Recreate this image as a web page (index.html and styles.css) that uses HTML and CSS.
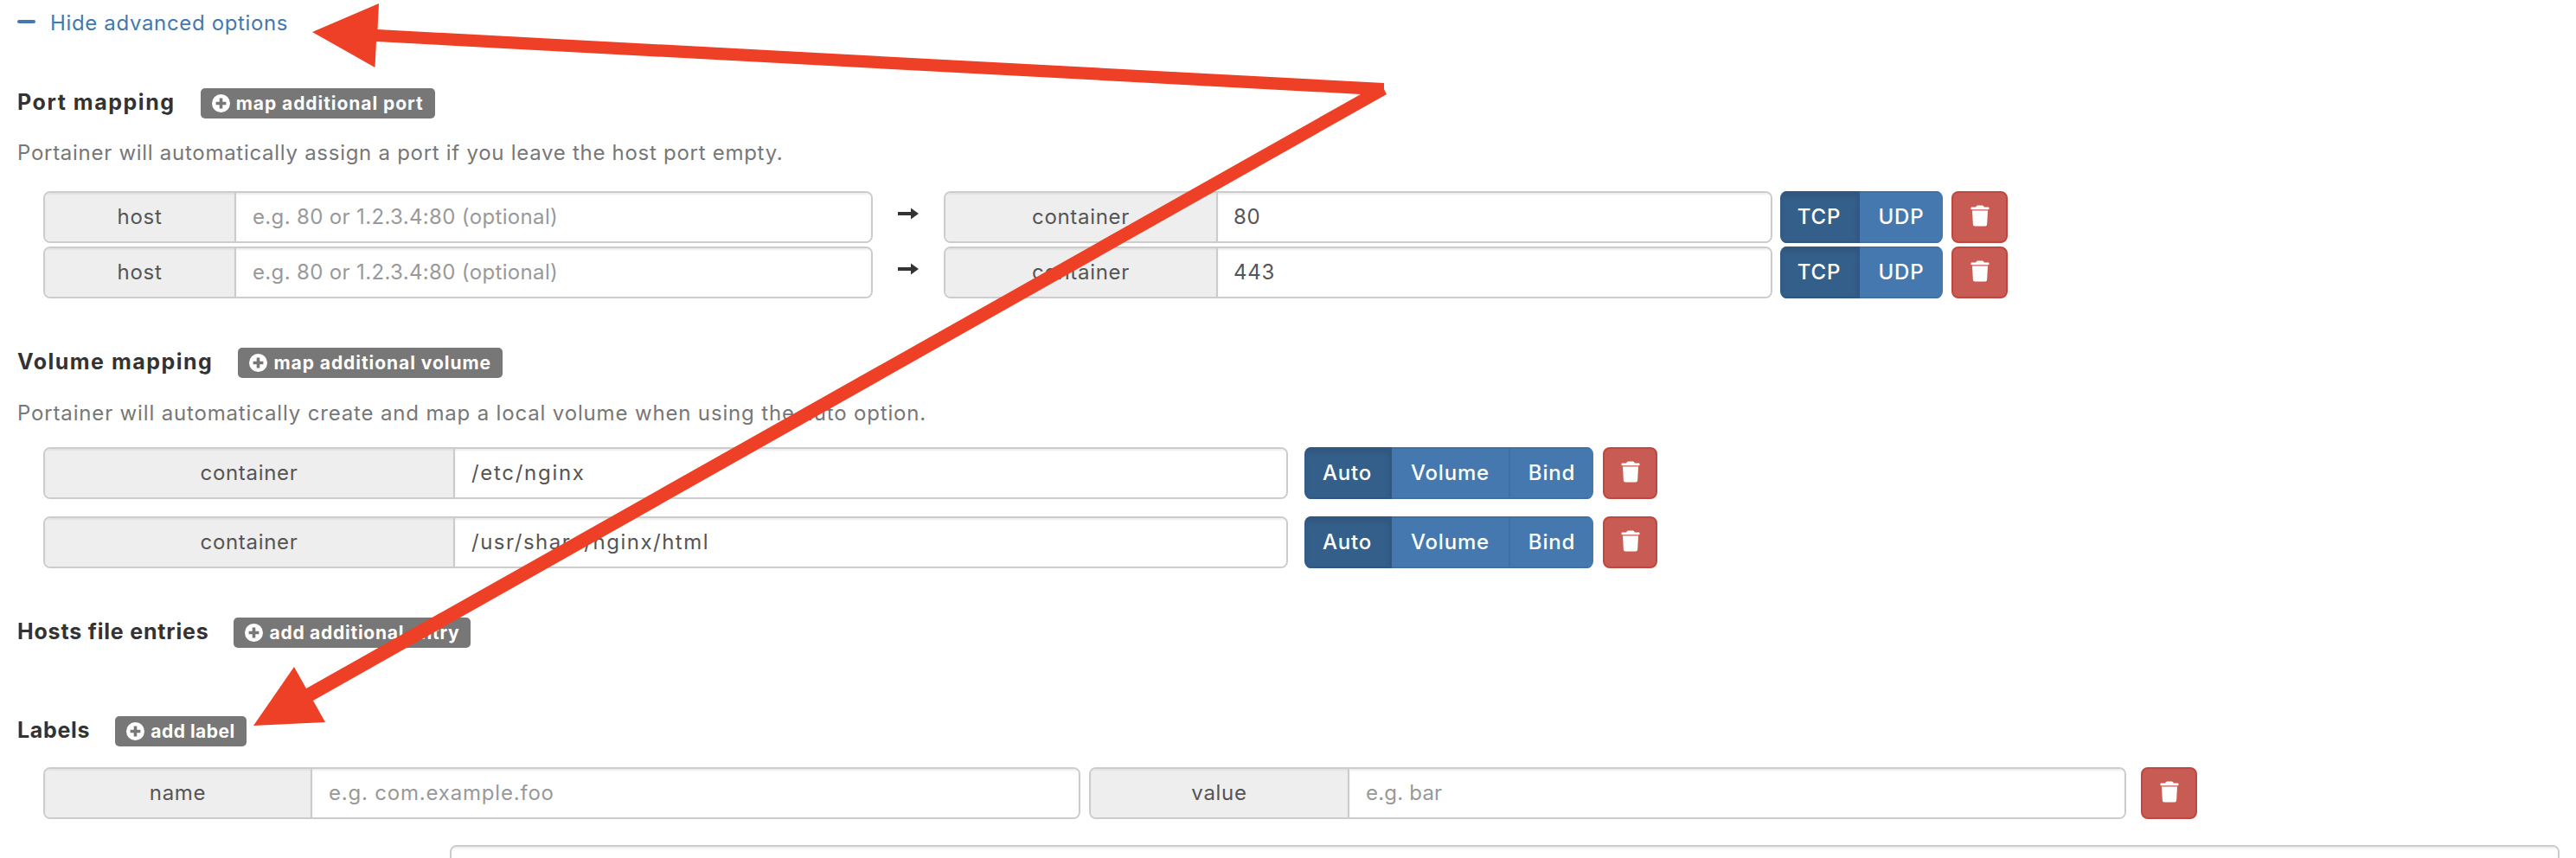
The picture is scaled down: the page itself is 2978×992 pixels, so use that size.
FILE: index.html
```html
<!DOCTYPE html>
<html lang="en">
<head>
<meta charset="utf-8">
<title>Advanced options</title>
<link rel="stylesheet" href="styles.css">
</head>
<body>
<svg width="0" height="0" class="defs">
  <defs>
    <symbol id="trash" viewBox="0 0 22 25">
      <path d="M0.5 3.2C0.5 2.8 0.8 2.6 1.2 2.6H6.2C6.6 1.2 7.6 0.6 9 0.6H13C14.4 0.6 15.4 1.2 15.8 2.6H20.8C21.2 2.6 21.5 2.8 21.5 3.2V4.6C21.5 5 21.2 5.2 20.8 5.2H1.2C0.8 5.2 0.5 5 0.5 4.6Z"/>
      <path d="M2 6.4H20L19.1 22.6C19 23.8 18.2 24.6 17 24.6H5C3.8 24.6 3 23.8 2.9 22.6Z"/>
    </symbol>
    <symbol id="plus" viewBox="0 0 21 21">
      <path fill-rule="evenodd" d="M10.5 0A10.5 10.5 0 1 1 10.5 21A10.5 10.5 0 1 1 10.5 0ZM8.7 4.6V8.7H4.6V12.3H8.7V16.4H12.3V12.3H16.4V8.7H12.3V4.6Z"/>
    </symbol>
  </defs>
</svg>
<main class="page">
  <a class="toggle"><span class="minus"></span><span class="toggle-text">Hide advanced options</span></a>

  <section class="heading s-port">
    <h3 class="title t-port">Port mapping</h3>
    <span class="badge"><svg class="plus"><use href="#plus"/></svg><span class="badge-text b-port">map additional port</span></span>
  </section>
  <p class="help help-port">Portainer will automatically assign a port if you leave the host port empty.</p>

  <div class="rows rows-port">
    <div class="row">
      <div class="group g-host"><div class="addon a-host">host</div><div class="field placeholder">e.g. 80 or 1.2.3.4:80 (optional)</div></div>
      <svg class="to" viewBox="0 0 24 14"><path d="M0 5H15V0.5L24 7L15 13.5V9H0Z"/></svg>
      <div class="group g-cont"><div class="addon a-cont">container</div><div class="field f-cont">80</div></div>
      <div class="btns b-proto"><span class="btn on w-tcp">TCP</span><span class="btn w-udp">UDP</span></div>
      <span class="del d-port"><svg class="trash"><use href="#trash"/></svg></span>
    </div>
    <div class="row">
      <div class="group g-host"><div class="addon a-host">host</div><div class="field placeholder">e.g. 80 or 1.2.3.4:80 (optional)</div></div>
      <svg class="to" viewBox="0 0 24 14"><path d="M0 5H15V0.5L24 7L15 13.5V9H0Z"/></svg>
      <div class="group g-cont"><div class="addon a-cont">container</div><div class="field f-cont">443</div></div>
      <div class="btns b-proto"><span class="btn on w-tcp">TCP</span><span class="btn w-udp">UDP</span></div>
      <span class="del d-port"><svg class="trash"><use href="#trash"/></svg></span>
    </div>
  </div>

  <section class="heading s-next">
    <h3 class="title t-vol">Volume mapping</h3>
    <span class="badge"><svg class="plus"><use href="#plus"/></svg><span class="badge-text b-vol">map additional volume</span></span>
  </section>
  <p class="help help-vol">Portainer will automatically create and map a local volume when using the auto option.</p>

  <div class="rows rows-vol">
    <div class="row">
      <div class="group g-vol"><div class="addon a-vol">container</div><div class="field f-vol">/etc/nginx</div></div>
      <div class="btns b-vol-btns"><span class="btn on w-auto">Auto</span><span class="btn w-volume">Volume</span><span class="btn sep w-bind">Bind</span></div>
      <span class="del d-vol"><svg class="trash"><use href="#trash"/></svg></span>
    </div>
    <div class="row">
      <div class="group g-vol"><div class="addon a-vol">container</div><div class="field f-vol f-long">/usr/share/nginx/html</div></div>
      <div class="btns b-vol-btns"><span class="btn on w-auto">Auto</span><span class="btn w-volume">Volume</span><span class="btn sep w-bind">Bind</span></div>
      <span class="del d-vol"><svg class="trash"><use href="#trash"/></svg></span>
    </div>
  </div>

  <section class="heading s-next">
    <h3 class="title t-hosts">Hosts file entries</h3>
    <span class="badge"><svg class="plus"><use href="#plus"/></svg><span class="badge-text b-hosts">add additional entry</span></span>
  </section>

  <section class="heading s-labels">
    <h3 class="title t-labels">Labels</h3>
    <span class="badge"><svg class="plus"><use href="#plus"/></svg><span class="badge-text b-label">add label</span></span>
  </section>

  <div class="rows rows-label">
    <div class="row">
      <div class="group g-label"><div class="addon a-name">name</div><div class="field placeholder ph-foo">e.g. com.example.foo</div></div>
      <div class="group g-label g-value"><div class="addon a-value">value</div><div class="field placeholder ph-bar">e.g. bar</div></div>
      <span class="del d-label"><svg class="trash"><use href="#trash"/></svg></span>
    </div>
  </div>

  <div class="group g-bottom"><div class="field"></div></div>
</main>

<svg class="annotation" viewBox="0 0 2978 992" aria-hidden="true">
  <polygon points="361,37 438,4 436.5,34 1600,96 1600,103 1603,109 362,810 376,835 293,839 340,771 354,796 1573,109 435,48 433.5,78"/>
</svg>
</body>
</html>
```
FILE: styles.css
```css
* { box-sizing: border-box; }
html, body { margin: 0; padding: 0; background: #fff; }
body {
  width: 2978px;
  height: 992px;
  overflow: hidden;
  position: relative;
  font-family: Inter, "Open Sans", sans-serif;
  font-size: 24px;
  color: #555;
}
.defs { position: absolute; }
.page { padding-left: 20px; }

.toggle { display: flex; align-items: center; height: 52px; color: #4478ae; }
.minus { width: 21px; height: 4px; border-radius: 2px; background: #4478ae; margin-top: -2px; }
.toggle-text { margin-left: 17px; font-size: 24px; letter-spacing: 0.65px; }

.heading { display: flex; align-items: center; height: 35px; }
.s-port { margin-top: 50px; }
.s-next { margin-top: 57px; }
.s-labels { margin-top: 79px; }
.title { margin: 0 29px 2px 0; font-size: 25px; font-weight: 700; color: #333; line-height: 33px; }
.t-port { letter-spacing: 1.55px; }
.t-vol { letter-spacing: 1.5px; }
.t-hosts { letter-spacing: 0.8px; }
.t-labels { letter-spacing: 0.7px; }

.badge {
  display: flex;
  align-items: center;
  height: 35px;
  padding: 0 13px;
  border-radius: 5px;
  background: #777;
  color: #fff;
  font-size: 21px;
  font-weight: 700;
}
.plus { width: 21px; height: 21px; fill: #fff; margin-right: 7px; flex: none; }
.badge-text { white-space: nowrap; letter-spacing: 0.95px; }
.b-hosts { letter-spacing: 0.75px; }
.b-label { letter-spacing: 0.5px; }

.help { margin: 0; height: 36px; line-height: 36px; color: #777; font-size: 24px; }
.help-port { margin-top: 21px; line-height: 38px; letter-spacing: 0.72px; }
.help-vol { margin-top: 23px; letter-spacing: 0.84px; }

.rows { display: flex; flex-direction: column; margin-left: 30px; }
.rows-port { margin-top: 27px; gap: 4px; }
.rows-vol { margin-top: 21px; gap: 20px; }
.rows-label { margin-top: 24px; }
.row { display: flex; align-items: stretch; height: 60px; }

.group {
  display: flex;
  height: 60px;
  border: 2px solid #ccc;
  border-radius: 8px;
  overflow: hidden;
  flex: none;
}
.addon {
  display: flex;
  align-items: center;
  justify-content: center;
  padding-bottom: 2px;
  background: #eee;
  border-right: 2px solid #ccc;
  flex: none;
  box-shadow: inset 0 2px 2px rgba(0, 0, 0, .05);
  font-size: 24px;
  letter-spacing: 0.7px;
}
.field {
  display: flex;
  align-items: center;
  flex: 1;
  padding: 0 0 2px 19px;
  background: #fff;
  box-shadow: inset 0 2px 2px rgba(0, 0, 0, .075);
  font-size: 24px;
}
.placeholder { color: #999; letter-spacing: 0.35px; }
.ph-foo { letter-spacing: 0.8px; }
.ph-bar { letter-spacing: 0.2px; }

.g-host { width: 959px; }
.a-host { width: 221px; }
.to { width: 24px; height: 14px; margin: 19px 29px 0; fill: #333; flex: none; }
.g-cont { width: 958px; }
.a-cont { width: 315px; }
.f-cont { padding-left: 18px; letter-spacing: 0.7px; }
.b-proto { margin-left: 9px; }
.w-tcp { width: 92px; }
.w-udp { width: 96px; }
.d-port { margin-left: 10px; width: 65px; }

.g-vol { width: 1439px; }
.a-vol { width: 474px; }
.f-vol { letter-spacing: 1.7px; }
.f-long { letter-spacing: 1.5px; }
.b-vol-btns { margin-left: 19px; }
.w-auto { width: 101px; }
.w-volume { width: 135px; }
.w-bind { width: 98px; }
.d-vol { margin-left: 11px; width: 63px; }

.g-label { width: 1199px; }
.g-value { margin-left: 10px; }
.a-name { width: 309px; }
.a-value { width: 299px; }
.d-label { margin-left: 17px; width: 65px; }

.g-bottom { width: 2439px; margin: 30px 0 0 500px; }

.btns { display: flex; height: 60px; border-radius: 8px; overflow: hidden; flex: none; }
.btn {
  display: flex;
  align-items: center;
  justify-content: center;
  padding-bottom: 2px;
  background: #4478ae;
  border-top: 2px solid #3f70a3;
  border-bottom: 2px solid #3f70a3;
  color: #fff;
  font-size: 24px;
  font-weight: 500;
  letter-spacing: 0.8px;
}
.btn.on {
  background: #345f8a;
  border-top-color: #2f5880;
  border-bottom-color: #2f5880;
  border-right: 2px solid #2f5880;
  box-shadow: inset 0 4px 6px rgba(0, 0, 0, .1);
}
.btn.sep { border-left: 2px solid #3f70a3; }

.del {
  display: flex;
  align-items: center;
  justify-content: center;
  height: 60px;
  border: 2px solid #c0473f;
  border-radius: 8px;
  background: #c95b55;
  flex: none;
}
.trash { width: 22px; height: 25px; fill: #fff; margin-top: -3px; }

.annotation { position: absolute; left: 0; top: 0; width: 2978px; height: 992px; pointer-events: none; }
.annotation polygon { fill: #ee4026; }
```
